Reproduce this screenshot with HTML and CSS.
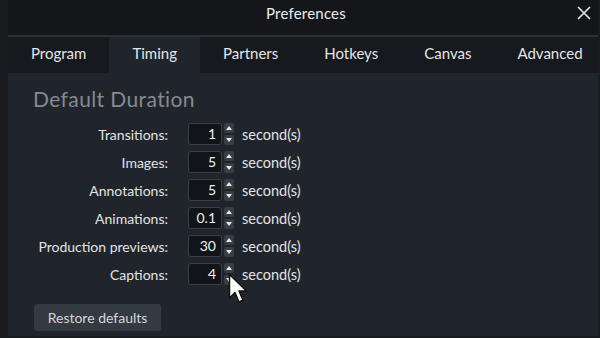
FILE: index.html
```html
<!DOCTYPE html>
<html lang="en">
  <head>
    <meta charset="UTF-8" />
    <meta name="viewport" content="width=device-width, initial-scale=1.0" />
    <title>Preferences</title>
    <link rel="stylesheet" href="styles.css">
  </head>
  <body>
    <div class="dialog">
      <div class="titlebar">
        <span class="title">Preferences</span>
        <svg class="close" width="14" height="14" viewBox="0 0 14 14">
          <path d="M1 1 L13 13 M13 1 L1 13" stroke="#e8e9ea" stroke-width="1.6" fill="none" />
        </svg>
      </div>
      <div class="tabs">
        <div class="tab">Program</div>
        <div class="tab active">Timing</div>
        <div class="tab">Partners</div>
        <div class="tab">Hotkeys</div>
        <div class="tab">Canvas</div>
        <div class="tab">Advanced</div>
      </div>
      <div class="content">
        <h2>Default Duration</h2>
        <div class="rows">
          <label>Transitions:</label>
          <div class="field">1</div>
          <div class="spin"><span class="up"></span><span class="down"></span></div>
          <span class="unit">second(s)</span>

          <label>Images:</label>
          <div class="field">5</div>
          <div class="spin"><span class="up"></span><span class="down"></span></div>
          <span class="unit">second(s)</span>

          <label>Annotations:</label>
          <div class="field">5</div>
          <div class="spin"><span class="up"></span><span class="down"></span></div>
          <span class="unit">second(s)</span>

          <label>Animations:</label>
          <div class="field">0.1</div>
          <div class="spin"><span class="up"></span><span class="down"></span></div>
          <span class="unit">second(s)</span>

          <label>Production previews:</label>
          <div class="field">30</div>
          <div class="spin"><span class="up"></span><span class="down"></span></div>
          <span class="unit">second(s)</span>

          <label>Captions:</label>
          <div class="field">4</div>
          <div class="spin cursor-host">
            <span class="up"></span><span class="down"></span>
            <!-- mouse pointer over the spinner -->
            <svg class="cursor" width="22" height="32" viewBox="0 0 22 32">
              <path d="M1.5 1.5 L1.5 25 L7 19.5 L11 29 L15 27.3 L11 18 L18.5 18 Z" fill="#fff" stroke="#111" stroke-width="1.5" stroke-linejoin="round" />
            </svg>
          </div>
          <span class="unit">second(s)</span>
        </div>
        <button class="restore">Restore defaults</button>
      </div>
    </div>
  </body>
</html>
```

FILE: styles.css
```css
body {
  margin: 0;
  background-color: #1a1c20;
  font-family: Lato, "Open Sans", sans-serif;
  color: #e6e7e8;
  overflow: hidden;
}
.dialog {
  margin-left: 8px;
  width: 590px;
  height: 336px;
  background-color: #20252c;
  display: flex;
  flex-direction: column;
}
.titlebar {
  height: 31px;
  padding-top: 4px;
  background-color: #141619;
  border-bottom: 2px solid #2d3136;
  display: flex;
  align-items: flex-start;
  justify-content: center;
  position: relative;
}
.title {
  font-size: 15px;
  line-height: 18px;
  color: #ecedee;
  margin-left: 6px;
  letter-spacing: 0.2px;
}
.close {
  position: absolute;
  right: 7px;
  top: 6px;
}
.tabs {
  display: flex;
  height: 36px;
  background-color: #16191d;
}
.tab {
  padding: 0 23px 5px;
  display: flex;
  align-items: center;
  font-size: 15px;
  color: #e4e5e6;
}
.tab.active {
  background-color: #20252c;
}
.tab:last-child {
  flex: 1;
  justify-content: center;
}
.content {
  padding-top: 13px;
}
h2 {
  margin: 0 0 11px 25px;
  font-size: 21px;
  font-weight: normal;
  line-height: 26px;
  letter-spacing: 0.4px;
  color: #868a90;
}
.rows {
  display: grid;
  grid-template-columns: 180px 36px 10px auto;
  grid-auto-rows: 22px;
  row-gap: 6px;
  align-items: center;
}
.rows label {
  text-align: right;
  padding-right: 20px;
  font-size: 14px;
  color: #e2e3e4;
}
.field {
  width: 27px;
  height: 20px;
  border: 1px solid #3a3f46;
  border-radius: 3px;
  background-color: #111418;
  text-align: right;
  padding-right: 5px;
  font-size: 14px;
  line-height: 20px;
  color: #eeeff0;
}
.spin {
  display: flex;
  flex-direction: column;
  gap: 2px;
}
.spin span {
  width: 10px;
  height: 10px;
  border-radius: 2px;
  background-color: #383d44;
  position: relative;
}
.spin span::after {
  content: '';
  position: absolute;
  left: 2px;
  border-left: 3px solid transparent;
  border-right: 3px solid transparent;
}
.spin .up::after {
  top: 3px;
  border-bottom: 4px solid #e8e9ea;
}
.spin .down::after {
  top: 3px;
  border-top: 4px solid #e8e9ea;
}
.unit {
  margin-left: 8px;
  font-size: 14.5px;
  color: #e2e3e4;
}
.cursor-host {
  position: relative;
}
.cursor {
  position: absolute;
  left: 4px;
  top: 10px;
}
.restore {
  margin: 19px 0 0 26px;
  width: 127px;
  height: 27px;
  border: none;
  border-radius: 3px;
  background-color: #343a41;
  color: #d4d6d8;
  font-family: Lato, "Open Sans", sans-serif;
  font-size: 14px;
}
```
